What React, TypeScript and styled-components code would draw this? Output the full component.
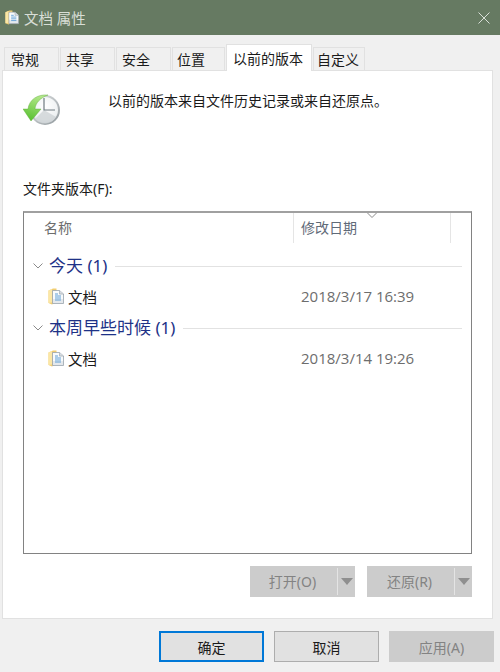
import React from "react";
import styled, { createGlobalStyle } from "styled-components";

const GlobalStyle = createGlobalStyle`
  html, body {
    margin: 0;
    padding: 0;
    background: #f0f0f0;
  }
  body {
    width: 500px;
    height: 672px;
    overflow: hidden;
    font-family: "Noto Sans", "Noto Sans CJK SC", sans-serif;
    color: #1a1a1a;
  }
`;

const groups = [
  { name: "今天 (1)", date: "2018/3/17 16:39" },
  { name: "本周早些时候 (1)", date: "2018/3/14 19:26" },
];

const tabs = [
  { label: "常规", width: 55, pad: 6 },
  { label: "共享", width: 55, pad: 5 },
  { label: "安全", width: 55, pad: 5 },
  { label: "位置", width: 53, pad: 4 },
  { label: "以前的版本", width: 86, pad: 6, active: true },
  { label: "自定义", width: 52, pad: 3 },
];

function FolderDocIcon({ size = 16 }: { size?: number }) {
  return (
    <DocSvg width={size} height={size + 1} viewBox="0 0 16 17">
      <path d="M0.5 2.5 L5 0.5 H8.5 V14 L4 16.5 L0.5 15 Z" fill="#f1cd72" />
      <path d="M0.5 2.5 L4 1 V14.5 L0.5 15 Z" fill="#fbe7a6" />
      <path d="M4.5 2.5 H11.5 L15.5 6 V15.5 H4.5 Z" fill="#e4e8ec" stroke="#9aa4ad" strokeWidth="0.8" />
      <path d="M5 3 H11 V6.5 H15 V11 H5 Z" fill="#f8fafb" />
      <path d="M11.5 2.5 V6 H15.5" fill="#d8dde2" stroke="#9aa4ad" strokeWidth="0.6" />
      <path d="M7 6 H10 M7 8 H13 M7 10 H13 M7 12 H13" stroke="#5f9fd6" strokeWidth="1" />
    </DocSvg>
  );
}

function ClockIcon() {
  return (
    <svg width="40" height="34" viewBox="0 0 40 34">
      <defs>
        <radialGradient id="face" cx="0.5" cy="0.35" r="0.75">
          <stop offset="0" stopColor="#ffffff" />
          <stop offset="0.7" stopColor="#eef1f2" />
          <stop offset="1" stopColor="#cdd2d5" />
        </radialGradient>
        <linearGradient id="ring" x1="0" y1="0" x2="1" y2="1">
          <stop offset="0" stopColor="#e6e9ea" />
          <stop offset="1" stopColor="#8f979b" />
        </linearGradient>
        <linearGradient id="arrow" x1="0.6" y1="0" x2="0.3" y2="1">
          <stop offset="0" stopColor="#b4e88a" />
          <stop offset="1" stopColor="#58c030" />
        </linearGradient>
      </defs>
      <circle cx="22" cy="17" r="15" fill="url(#ring)" />
      <circle cx="22" cy="17" r="13" fill="url(#face)" />
      <path d="M21 17 L12 26 A13 13 0 0 0 33 24 Z" fill="#ccd1d4" opacity="0.75" />
      <path d="M21 5 V17 H32" fill="none" stroke="#6f7a80" strokeWidth="1.2" />
      <path
        d="M25 2 C14 1 6 7 5 16 H0 L8 28 L18 16 H12 C12.5 10 17 5 25 2 Z"
        fill="url(#arrow)"
        stroke="#55aa30"
        strokeWidth="0.4"
      />
    </svg>
  );
}

function Chevron() {
  return (
    <svg width="10" height="6" viewBox="0 0 10 6">
      <path d="M0.5 0.5 L5 5 L9.5 0.5" fill="none" stroke="#8a8a8a" strokeWidth="1" />
    </svg>
  );
}

export default function App() {
  return (
    <Dialog>
      <GlobalStyle />
      <TitleBar>
        <TitleIcon>
          <FolderDocIcon size={14} />
        </TitleIcon>
        <TitleText>文档 属性</TitleText>
        <CloseGlyph width="12" height="12" viewBox="0 0 12 12">
          <path d="M0.5 0.5 L11.5 11.5 M11.5 0.5 L0.5 11.5" stroke="#d9dfd8" strokeWidth="1" />
        </CloseGlyph>
      </TitleBar>

      <TabStrip>
        {tabs.map((t) => (
          <Tab key={t.label} $active={t.active} $width={t.width} $pad={t.pad}>
            {t.label}
          </Tab>
        ))}
      </TabStrip>

      <Panel>
        <InfoRow>
          <ClockSlot>
            <ClockIcon />
          </ClockSlot>
          <InfoText>以前的版本来自文件历史记录或来自还原点。</InfoText>
        </InfoRow>

        <ListLabel>文件夹版本(F):</ListLabel>

        <ListBox>
          <ListHeader>
            <HeaderCell>名称</HeaderCell>
            <DateHeaderCell>
              修改日期
              <SortCaret width="10" height="5" viewBox="0 0 10 5">
                <path d="M0.5 0 L5 4.5 L9.5 0" fill="none" stroke="#8a8a8a" strokeWidth="1" />
              </SortCaret>
            </DateHeaderCell>
          </ListHeader>

          {groups.map((g) => (
            <Group key={g.name}>
              <GroupHead>
                <Chevron />
                <GroupName>{g.name}</GroupName>
                <GroupLine />
              </GroupHead>
              <ItemRow>
                <ItemName>
                  <FolderDocIcon />
                  <span>文档</span>
                </ItemName>
                <ItemDate>{g.date}</ItemDate>
              </ItemRow>
            </Group>
          ))}
        </ListBox>

        <ActionRow>
          <SplitButton>
            <SplitLabel>打开(O)</SplitLabel>
            <SplitArrow />
          </SplitButton>
          <SplitButton>
            <SplitLabel>还原(R)</SplitLabel>
            <SplitArrow />
          </SplitButton>
        </ActionRow>
      </Panel>

      <Footer>
        <FooterButton $variant="primary">确定</FooterButton>
        <FooterButton>取消</FooterButton>
        <FooterButton $variant="disabled">应用(A)</FooterButton>
      </Footer>
    </Dialog>
  );
}

const DocSvg = styled.svg`
  display: block;
  flex: none;
`;

const Dialog = styled.div`
  width: 500px;
  height: 672px;
  display: flex;
  flex-direction: column;
  background: #f0f0f0;
  overflow: hidden;
`;

const TitleBar = styled.header`
  height: 35px;
  flex: none;
  display: flex;
  align-items: center;
  padding: 0 10px 0 5px;
  background: #667a62;
  box-sizing: border-box;
`;

const TitleIcon = styled.span`
  display: flex;
  margin-right: 5px;
`;

const TitleText = styled.span`
  font-size: 14.5px;
  color: #d8ded6;
  flex: 1;
`;

const CloseGlyph = styled.svg`
  display: block;
`;

const TabStrip = styled.nav`
  display: flex;
  align-items: flex-end;
  height: 36px;
  flex: none;
  padding-left: 4px;
  box-sizing: border-box;
`;

const Tab = styled.div<{ $active?: boolean; $width: number; $pad: number }>`
  width: ${(p) => p.$width}px;
  height: ${(p) => (p.$active ? 27 : 24)}px;
  margin-right: 1px;
  padding-left: ${(p) => p.$pad}px;
  box-sizing: border-box;
  display: flex;
  align-items: center;
  font-size: 14px;
  color: #1a1a1a;
  white-space: nowrap;
  background: ${(p) => (p.$active ? "#ffffff" : "#f0f0f0")};
  border: 1px solid #e1e1e1;
  border-bottom: ${(p) => (p.$active ? "none" : "1px solid #e1e1e1")};
  position: relative;
  z-index: ${(p) => (p.$active ? 1 : 0)};
`;

const Panel = styled.main`
  margin: -1px 7px 0 2px;
  height: 549px;
  flex: none;
  box-sizing: border-box;
  background: #ffffff;
  border: 1px solid #e1e1e1;
  padding: 0 19px 0 20px;
`;

const InfoRow = styled.div`
  display: flex;
  align-items: flex-start;
  height: 104px;
`;

const ClockSlot = styled.div`
  width: 85px;
  padding-top: 22px;
  flex: none;
`;

const InfoText = styled.p`
  margin: 20px 0 0;
  font-size: 14px;
  line-height: 20px;
  color: #1a1a1a;
`;

const ListLabel = styled.div`
  font-size: 14px;
  line-height: 20px;
  height: 36px;
  padding-top: 4px;
  box-sizing: border-box;
  color: #1a1a1a;
`;

const ListBox = styled.section`
  width: 449px;
  height: 343px;
  box-sizing: border-box;
  border: 1px solid #828282;
  border-top: 2px solid #a0a0a0;
  background: #fff;
`;

const ListHeader = styled.div`
  display: flex;
  height: 30px;
`;

const HeaderCell = styled.div`
  width: 270px;
  box-sizing: border-box;
  padding-left: 20px;
  font-size: 14px;
  line-height: 30px;
  color: #6d6d6d;
  border-right: 1px solid #e5e5e5;
`;

const DateHeaderCell = styled.div`
  width: 157px;
  box-sizing: border-box;
  padding-left: 7px;
  font-size: 14px;
  line-height: 30px;
  color: #5f6a78;
  border-right: 1px solid #e5e5e5;
  position: relative;
`;

const SortCaret = styled.svg`
  position: absolute;
  left: 73px;
  top: 0;
`;

const Group = styled.div`
  margin-top: 3px;
  &:nth-of-type(2) {
    margin-top: 9px;
  }
`;

const GroupHead = styled.div`
  display: flex;
  align-items: center;
  height: 28px;
  padding: 0 9px;
`;

const GroupName = styled.span`
  font-size: 17px;
  line-height: 26px;
  margin-top: -1px;
  color: #1e3287;
  margin-left: 6px;
  white-space: nowrap;
`;

const GroupLine = styled.span`
  flex: 1;
  height: 1px;
  background: #e2e2e2;
  margin-left: 8px;
`;

const ItemRow = styled.div`
  display: flex;
  align-items: center;
  height: 30px;
  margin-top: 1px;
`;

const ItemName = styled.div`
  width: 277px;
  box-sizing: border-box;
  padding-left: 24px;
  display: flex;
  align-items: center;
  gap: 4px;
  font-size: 14.5px;
  color: #1a1a1a;
`;

const ItemDate = styled.div`
  font-family: "Open Sans", "Noto Sans", sans-serif;
  font-size: 15px;
  color: #6d6d6d;
`;

const ActionRow = styled.div`
  display: flex;
  justify-content: flex-end;
  gap: 12px;
  width: 449px;
  margin-top: 12px;
`;

const SplitButton = styled.div`
  width: 105px;
  height: 31px;
  box-sizing: border-box;
  display: flex;
  background: #cccccc;
  color: #838383;
  font-size: 14px;
`;

const SplitLabel = styled.span`
  flex: 1;
  text-align: center;
  padding-right: 2px;
  border-right: 1px solid #e4e4e4;
  margin: 2px 0;
  line-height: 27px;
`;

const SplitArrow = styled.span`
  width: 17px;
  flex: none;
  position: relative;
  &::after {
    content: "";
    position: absolute;
    left: 3px;
    top: 12px;
    border-left: 6px solid transparent;
    border-right: 6px solid transparent;
    border-top: 7px solid #8f8f8f;
  }
`;

const Footer = styled.footer`
  display: flex;
  justify-content: flex-end;
  gap: 10px;
  padding: 12px 6px 0 0;
`;

const FooterButton = styled.div<{ $variant?: "primary" | "disabled" }>`
  width: 105px;
  height: 31px;
  box-sizing: border-box;
  display: flex;
  align-items: center;
  justify-content: center;
  font-size: 14px;
  background: ${(p) => (p.$variant === "disabled" ? "#cccccc" : "#e1e1e1")};
  color: ${(p) => (p.$variant === "disabled" ? "#838383" : "#1a1a1a")};
  border: ${(p) =>
    p.$variant === "primary"
      ? "2px solid #0078d7"
      : p.$variant === "disabled"
        ? "1px solid #cccccc"
        : "1px solid #adadad"};
`;
